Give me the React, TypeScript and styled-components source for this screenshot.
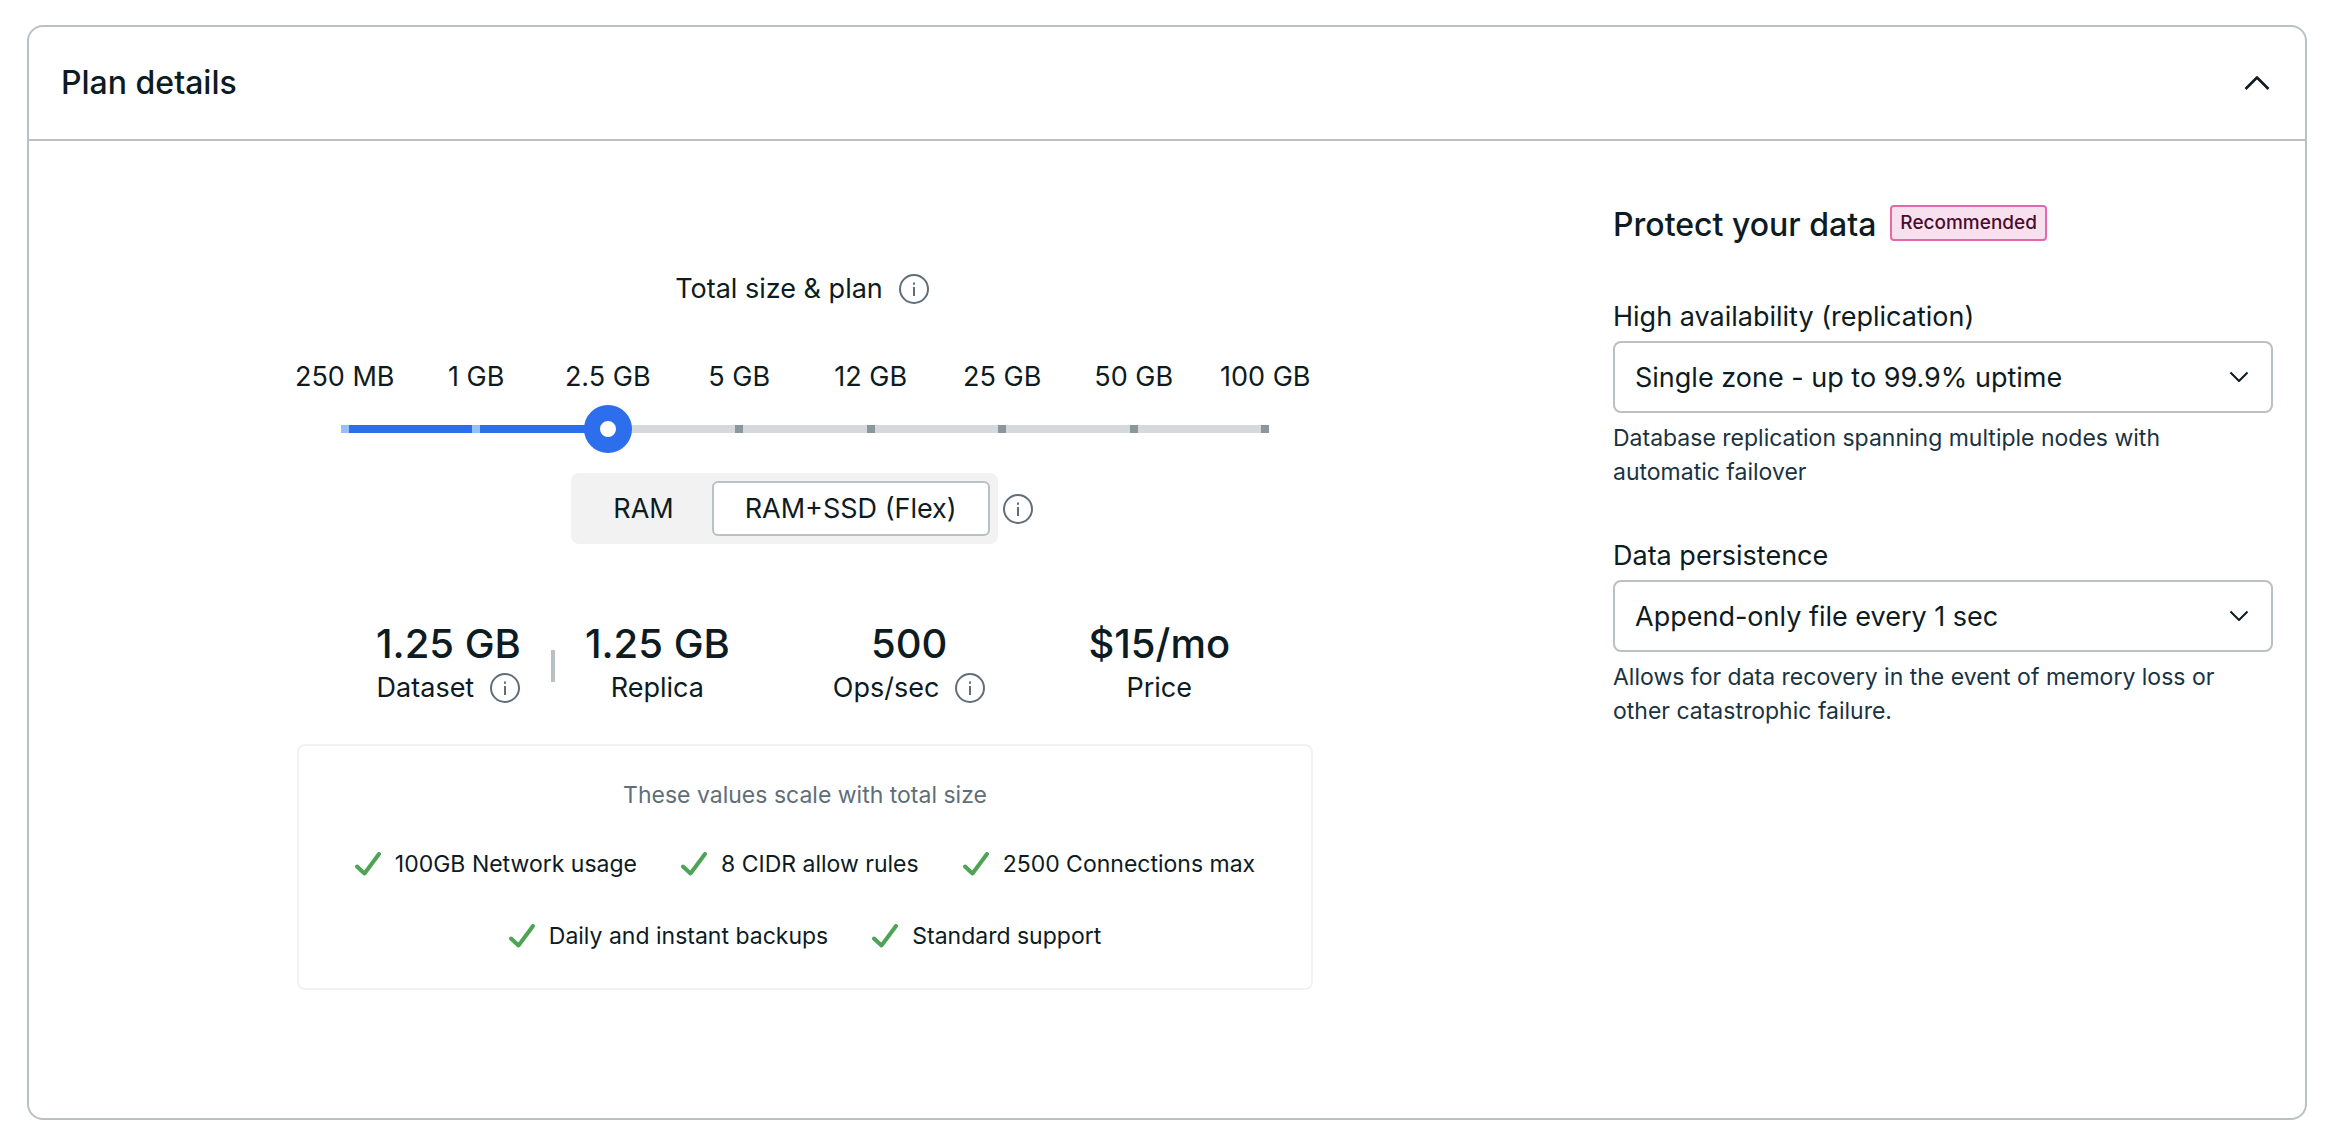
import React, { useState } from "react";
import styled, { createGlobalStyle } from "styled-components";

const ink = "#0d1b22";
const slate = "#1a3341";
const line = "#b9c1c5";
const muted = "#5f6e78";
const blue = "#2d6eed";

const GlobalStyle = createGlobalStyle`
  *, *::before, *::after { box-sizing: border-box; }
  body { margin: 0; background: #fff; }
  body, button, select, input { font-family: Inter, "Liberation Sans", sans-serif; color: ${ink}; }
`;

const Page = styled.main`
  min-height: 100vh;
  padding: 25px 45px 26px 27px;
  display: flex;
`;

const Card = styled.section`
  flex: 1;
  min-width: 0;
  border: 2px solid ${line};
  border-radius: 16px;
  background: #fff;
`;

const CardHeader = styled.header`
  display: flex;
  align-items: center;
  justify-content: space-between;
  height: 114px;
  padding: 0 32px;
  border-bottom: 2px solid ${line};
`;

const Title = styled.h2`
  margin: 0;
  font-size: 32px;
  font-weight: 500;
  line-height: 40px;
`;

const IconButton = styled.button`
  display: flex;
  padding: 0;
  border: 0;
  background: none;
  color: ${muted};
  cursor: pointer;
`;

const Body = styled.div`
  display: grid;
  grid-template-columns: minmax(0, 1fr) 660px;
  gap: 64px;
  padding: 64px 32px;
`;

const PlanColumn = styled.div`
  display: flex;
  flex-direction: column;
  align-items: center;
  padding-top: 64px;
`;

const InlineRow = styled.div<{ $gap: number }>`
  display: flex;
  align-items: center;
  gap: ${(p) => p.$gap}px;
  font-size: 27px;
  line-height: 40px;
  white-space: nowrap;
`;

const PlanLabel = styled(InlineRow)`
  padding-right: 6px;
`;

const Slider = styled.div`
  width: 1052px;
  max-width: 100%;
  margin-top: 48px;
`;

const SizeLabels = styled.div`
  display: grid;
  grid-template-columns: repeat(8, 1fr);
  font-size: 27px;
  line-height: 40px;
  text-align: center;
  white-space: nowrap;
`;

const Rail = styled.div`
  display: grid;
  align-items: center;
  margin-top: 8px;
  padding: 0 42px;
  > * { grid-area: 1 / 1; }
`;

const Track = styled.div<{ $fill: number }>`
  display: flex;
  justify-content: space-between;
  height: 8px;
  margin: 0 20px;
  background: linear-gradient(to right, ${blue} ${(p) => p.$fill}%, #d5d9dc ${(p) => p.$fill}%);
`;

const Tick = styled.span<{ $passed: boolean }>`
  width: 8px;
  background: ${(p) => (p.$passed ? "#97bff7" : "#8a979d")};
`;

const Range = styled.input`
  appearance: none;
  width: 100%;
  height: 48px;
  margin: 0;
  background: transparent;
  cursor: pointer;
  &::-webkit-slider-thumb {
    appearance: none;
    width: 48px;
    height: 48px;
    border: 16px solid ${blue};
    border-radius: 50%;
    background: #fff;
  }
`;

const Segments = styled.div`
  display: flex;
  gap: 4px;
  padding: 8px;
  border-radius: 8px;
  background: #f2f2f2;
`;

const Segment = styled.button<{ $on: boolean }>`
  height: 55px;
  padding: 0 ${(p) => (p.$on ? 31 : 32)}px;
  border: 2px solid ${(p) => (p.$on ? line : "transparent")};
  border-radius: 6px;
  background: ${(p) => (p.$on ? "#fff" : "transparent")};
  font-size: 27px;
  cursor: pointer;
`;

const PlanType = styled.div`
  display: flex;
  align-items: center;
  gap: 5px;
  margin: 20px 0 76px;
  padding-right: 6px;
`;

const Stats = styled.div`
  display: flex;
  justify-content: center;
  gap: 103px;
  padding-right: 4px;
`;

const StatPair = styled.div`
  display: flex;
  align-items: center;
  gap: 30px;
`;

const Divider = styled.span`
  width: 4px;
  height: 32px;
  margin-top: 4px;
  background: ${line};
`;

const Stat = styled.div`
  display: flex;
  flex-direction: column;
  align-items: center;
`;

const StatValue = styled.strong`
  font-size: 40px;
  font-weight: 500;
  line-height: 48px;
`;

const Limits = styled.div`
  width: 1016px;
  max-width: 100%;
  margin-top: 36px;
  padding: 31px 24px 34px;
  border: 2px solid #f2f2f2;
  border-radius: 8px;
  text-align: center;
`;

const LimitsTitle = styled.p`
  margin: 0 0 33px;
  color: ${muted};
  font-size: 23px;
  line-height: 36px;
`;

const LimitList = styled.ul`
  display: flex;
  flex-wrap: wrap;
  justify-content: center;
  gap: 36px 44px;
  margin: 0;
  padding: 0;
  list-style: none;
`;

const Limit = styled.li`
  display: flex;
  align-items: center;
  gap: 14px;
  font-size: 23px;
  line-height: 36px;
  white-space: nowrap;
`;

const ProtectHeading = styled.div`
  display: flex;
  align-items: flex-start;
  gap: 14px;
  margin-bottom: 52px;
`;

const Badge = styled.span`
  padding: 0 8px;
  border: 2px solid #e667ab;
  border-radius: 4px;
  background: #f8e1ee;
  color: #4d0a2c;
  font-size: 19px;
  font-weight: 500;
  line-height: 32px;
`;

const Field = styled.div`
  & + & { margin-top: 47px; }
`;

const FieldLabel = styled.label`
  display: block;
  margin-bottom: 4px;
  font-size: 27px;
  line-height: 40px;
`;

const SelectBox = styled.div`
  display: grid;
  align-items: center;
  > * { grid-area: 1 / 1; }
  > svg { justify-self: end; margin-right: 24px; pointer-events: none; }
`;

const Select = styled.select`
  appearance: none;
  width: 100%;
  height: 72px;
  padding: 0 64px 0 20px;
  border: 2px solid ${line};
  border-radius: 8px;
  background: #fff;
  font-size: 27px;
`;

const Help = styled.p`
  margin: 8px 0 0;
  color: ${slate};
  font-size: 23px;
  line-height: 34px;
`;

function Info({ label }: { label: string }) {
  return (
    <IconButton type="button" aria-label={label}>
      <svg width="30" height="30" viewBox="0 0 30 30" fill="none" stroke="currentColor" strokeWidth="2">
        <circle cx="15" cy="15" r="14" />
        <path d="M15 13v9M15 8.5v2.2" />
      </svg>
    </IconButton>
  );
}

function Check() {
  return (
    <svg width="26" height="24" viewBox="0 0 26 24" fill="none" stroke="#4ca454" strokeWidth="4" strokeLinecap="round" strokeLinejoin="round" aria-hidden="true">
      <path d="M2 14.5L9.5 21.5L24 2" />
    </svg>
  );
}

function ChevronDown() {
  return (
    <svg width="20" height="12" viewBox="0 0 20 12" fill="none" stroke={ink} strokeWidth="2" strokeLinejoin="round" aria-hidden="true">
      <path d="M1.5 1.5L10 10L18.5 1.5" />
    </svg>
  );
}

const sizes = ["250 MB", "1 GB", "2.5 GB", "5 GB", "12 GB", "25 GB", "50 GB", "100 GB"];
const planTypes = ["RAM", "RAM+SSD (Flex)"];
const limits = [
  "100GB Network usage",
  "8 CIDR allow rules",
  "2500 Connections max",
  "Daily and instant backups",
  "Standard support",
];

export default function App() {
  const [size, setSize] = useState(2);
  const [planType, setPlanType] = useState("RAM+SSD (Flex)");

  return (
    <>
      <GlobalStyle />
      <Page>
        <Card>
          <CardHeader>
            <Title>Plan details</Title>
            <IconButton type="button" aria-label="Collapse">
              <svg width="32" height="32" viewBox="0 0 32 32" fill="none" stroke={ink} strokeWidth="2.6" strokeLinejoin="round">
                <path d="M4.5 22L16 10.5L27.5 22" />
              </svg>
            </IconButton>
          </CardHeader>
          <Body>
            <PlanColumn>
              <PlanLabel $gap={16}>
                <label htmlFor="size">Total size &amp; plan</label>
                <Info label="About total size" />
              </PlanLabel>
              <Slider>
                <SizeLabels>
                  {sizes.map((s) => (
                    <span key={s}>{s}</span>
                  ))}
                </SizeLabels>
                <Rail>
                  <Track $fill={(size / 7) * 100}>
                    {sizes.map((s, i) => (
                      <Tick key={s} $passed={i < size} />
                    ))}
                  </Track>
                  <Range
                    id="size"
                    type="range"
                    min={0}
                    max={7}
                    value={size}
                    onChange={(e) => setSize(Number(e.target.value))}
                  />
                </Rail>
              </Slider>
              <PlanType>
                <Segments>
                  {planTypes.map((t) => (
                    <Segment key={t} type="button" $on={t === planType} aria-pressed={t === planType} onClick={() => setPlanType(t)}>
                      {t}
                    </Segment>
                  ))}
                </Segments>
                <Info label="About plan types" />
              </PlanType>
              <Stats>
                <StatPair>
                  <Stat>
                    <StatValue>1.25 GB</StatValue>
                    <InlineRow $gap={16}>
                      Dataset <Info label="About dataset" />
                    </InlineRow>
                  </Stat>
                  <Divider />
                  <Stat>
                    <StatValue>1.25 GB</StatValue>
                    <InlineRow $gap={0}>Replica</InlineRow>
                  </Stat>
                </StatPair>
                <Stat>
                  <StatValue>500</StatValue>
                  <InlineRow $gap={16}>
                    Ops/sec <Info label="About operations per second" />
                  </InlineRow>
                </Stat>
                <Stat>
                  <StatValue>$15/mo</StatValue>
                  <InlineRow $gap={0}>Price</InlineRow>
                </Stat>
              </Stats>
              <Limits>
                <LimitsTitle>These values scale with total size</LimitsTitle>
                <LimitList>
                  {limits.map((l) => (
                    <Limit key={l}>
                      <Check />
                      {l}
                    </Limit>
                  ))}
                </LimitList>
              </Limits>
            </PlanColumn>
            <aside>
              <ProtectHeading>
                <Title as="h3">Protect your data</Title>
                <Badge>Recommended</Badge>
              </ProtectHeading>
              <Field>
                <FieldLabel htmlFor="availability">High availability (replication)</FieldLabel>
                <SelectBox>
                  <Select id="availability">
                    <option>Single zone - up to 99.9% uptime</option>
                  </Select>
                  <ChevronDown />
                </SelectBox>
                <Help>Database replication spanning multiple nodes with automatic failover</Help>
              </Field>
              <Field>
                <FieldLabel htmlFor="persistence">Data persistence</FieldLabel>
                <SelectBox>
                  <Select id="persistence">
                    <option>Append-only file every 1 sec</option>
                  </Select>
                  <ChevronDown />
                </SelectBox>
                <Help>Allows for data recovery in the event of memory loss or other catastrophic failure.</Help>
              </Field>
            </aside>
          </Body>
        </Card>
      </Page>
    </>
  );
}
